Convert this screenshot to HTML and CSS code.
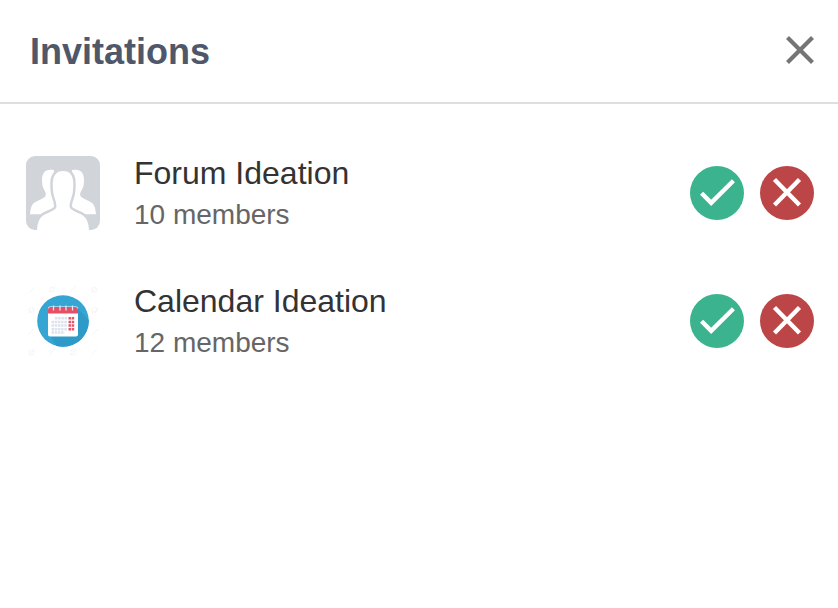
FILE: index.html
```html
<!DOCTYPE html>
<html lang="en">
<head>
<meta charset="utf-8">
<title>Invitations</title>
<link rel="stylesheet" href="styles.css">
</head>
<body>
<header class="header">
  <h1 class="title">Invitations</h1>
  <svg class="close" viewBox="0 0 30 30"><path d="M2.500 2.500l25 25M27.500 2.500l-25 25"/></svg>
</header>
<main class="list">
  <div class="row">
    <svg class="avatar" viewBox="0 0 74 74">
      <rect width="74" height="74" rx="9" fill="#d1d5da"/>
      <g fill="#fff">
        <path id="side" d="M28 14.300C20 12.300 16 16.500 16 24c0 4 .5 7 2 9.500 1.300 2.300 2.600 4.500 1.500 6.500-1.500 2.500-8 4.500-11.500 7C5.200 49 4.500 53.500 4 58.300h11.500C19 54 28 53.500 29 50.500V45z"/>
        <use href="#side" transform="matrix(-1 0 0 1 74 0)"/>
        <path class="person" d="M9.700 76c0-9 2.300-14.500 6.600-17.500 4-2.800 11.500-4.300 12.700-7.200.9-2.600-.5-6.300-1.800-9.800C25.900 38 25.500 33 25.500 28c0-8.500 3.500-14.300 11.500-14.300S48.500 19.500 48.500 28c0 5-.4 10-1.700 13.500-1.300 3.500-2.700 7.200-1.800 9.800 1.200 2.900 8.700 4.400 12.700 7.200 4.300 3 6.600 8.500 6.600 17.500z"/>
      </g>
    </svg>
    <div class="info">
      <div class="name">Forum Ideation</div>
      <div class="members">10 members</div>
    </div>
    <div class="actions">
      <svg class="action accept" viewBox="0 0 54 54"><path d="M11.600 27.200L21.200 36.800 43.400 14.800"/></svg>
      <svg class="action decline" viewBox="0 0 54 54"><path d="M14.500 13.500l25 25.500M39.500 13.500l-25 25.500"/></svg>
    </div>
  </div>
  <div class="row">
    <svg class="avatar" viewBox="0 0 74 74">
      <defs><clipPath id="disc"><circle cx="37" cy="37" r="25.800"/></clipPath></defs>
      <g class="watermark">
        <path d="M3 9l6-6M23 8l6-6M44 8l6-6M65 9l5-5M2 30l6-6M66 30l6-6M2 51l6-6M66 51l6-6M3 71l6-6M23 71l6-6M44 71l6-6M65 71l6-6"/>
        <circle cx="5.500" cy="26" r="2.500"/><circle cx="68.500" cy="26" r="2.500"/><circle cx="26" cy="5.500" r="2.500"/><circle cx="68.500" cy="5.500" r="2.500"/><circle cx="5.500" cy="68.500" r="2.500"/><circle cx="47" cy="68.500" r="2.500"/>
      </g>
      <circle cx="37" cy="37" r="25.800" fill="#35a5d3"/>
      <path clip-path="url(#disc)" d="M51 24L76 49V76H39L23 50z" fill="#2e9ac8"/>
      <rect x="22" y="22.500" width="30" height="30" rx="2" fill="#fff"/>
      <path d="M22 29.500V26a3 3 0 0 1 3-3h24a3 3 0 0 1 3 3v3.500z" fill="#e65066"/>
      <path d="M27.500 21.500v5M34 21.500v5M40 21.500v5M46.500 21.500v5" stroke="#dbe8f0" stroke-width="1.300"/>
      <g fill="none" stroke-width="2.500" stroke-dasharray="2.500 .7">
        <path d="M29 34.300h12.500M25.500 38h16M25.500 41.600h16M25.500 45.200h16M25.500 48.600h13" stroke="#dce2ee"/>
        <path d="M42.500 34.300h6M42.500 38h6M42.500 41.600h6M42.500 45.200h6" stroke="#ea5368"/>
      </g>
    </svg>
    <div class="info">
      <div class="name">Calendar Ideation</div>
      <div class="members">12 members</div>
    </div>
    <div class="actions">
      <svg class="action accept" viewBox="0 0 54 54"><path d="M11.600 27.200L21.200 36.800 43.400 14.800"/></svg>
      <svg class="action decline" viewBox="0 0 54 54"><path d="M14.500 13.500l25 25.500M39.500 13.500l-25 25.500"/></svg>
    </div>
  </div>
</main>
</body>
</html>
```
FILE: styles.css
```css
* { box-sizing: border-box; }
body {
  margin: 0;
  background: #fff;
  font-family: "Liberation Sans", Helvetica, Arial, sans-serif;
}
.header {
  display: flex;
  align-items: center;
  justify-content: space-between;
  height: 104px;
  padding: 0 23px 0 30px;
  border-bottom: 2px solid #dedede;
}
.title {
  margin: 0;
  padding-top: 2px;
  font-size: 36px;
  line-height: 42px;
  font-weight: 700;
  color: #4f576a;
}
.close {
  width: 30px;
  height: 30px;
  margin-bottom: 2px;
  fill: none;
  stroke: #757575;
  stroke-width: 4.2;
}
.list { padding: 25px 24px 0 26px; }
.row {
  display: flex;
  align-items: center;
  height: 128px;
}
.avatar {
  width: 74px;
  height: 74px;
  flex: none;
}
.person {
  stroke: #d1d5da;
  stroke-width: 2.5;
}
.watermark {
  fill: none;
  stroke: #f5f5f5;
}
.info {
  flex: 1;
  margin-left: 34px;
  padding-top: 3px;
}
.name {
  font-size: 32px;
  line-height: 40px;
  color: #333;
}
.members {
  font-size: 28px;
  line-height: 43px;
  color: #666;
}
.actions {
  display: flex;
  gap: 16px;
}
.action {
  width: 54px;
  height: 54px;
  border-radius: 50%;
  fill: none;
  stroke: #fff;
  stroke-width: 4.400;
}
.accept { background: #3bb38f; }
.decline { background: #bc4547; }
```
